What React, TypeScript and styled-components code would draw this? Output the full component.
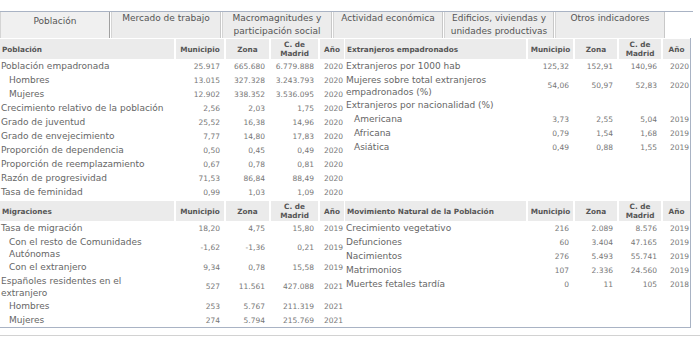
import React from 'react';
import styled, { createGlobalStyle } from 'styled-components';

type Values = [string, string, string, string];

interface IRow {
  label: string;
  values?: Values;
  sub?: boolean;
}

interface ISection {
  title: string;
  rows: IRow[];
}

const GlobalStyle = createGlobalStyle`
  html, body {
    margin: 0;
    padding: 0;
    background: #fff;
  }
  body {
    font-family: "DejaVu Sans", Verdana, sans-serif;
  }
`;

const tabs = [
  'Población',
  'Mercado de trabajo',
  'Macromagnitudes y participación social',
  'Actividad económica',
  'Edificios, viviendas y unidades productivas',
  'Otros indicadores',
];

const poblacion: ISection = {
  title: 'Población',
  rows: [
    { label: 'Población empadronada', values: ['25.917', '665.680', '6.779.888', '2020'] },
    { label: 'Hombres', sub: true, values: ['13.015', '327.328', '3.243.793', '2020'] },
    { label: 'Mujeres', sub: true, values: ['12.902', '338.352', '3.536.095', '2020'] },
    { label: 'Crecimiento relativo de la población', values: ['2,56', '2,03', '1,75', '2020'] },
    { label: 'Grado de juventud', values: ['25,52', '16,38', '14,96', '2020'] },
    { label: 'Grado de envejecimiento', values: ['7,77', '14,80', '17,83', '2020'] },
    { label: 'Proporción de dependencia', values: ['0,50', '0,45', '0,49', '2020'] },
    { label: 'Proporción de reemplazamiento', values: ['0,67', '0,78', '0,81', '2020'] },
    { label: 'Razón de progresividad', values: ['71,53', '86,84', '88,49', '2020'] },
    { label: 'Tasa de feminidad', values: ['0,99', '1,03', '1,09', '2020'] },
  ],
};

const extranjeros: ISection = {
  title: 'Extranjeros empadronados',
  rows: [
    { label: 'Extranjeros por 1000 hab', values: ['125,32', '152,91', '140,96', '2020'] },
    { label: 'Mujeres sobre total extranjeros empadronados (%)', values: ['54,06', '50,97', '52,83', '2020'] },
    { label: 'Extranjeros por nacionalidad (%)' },
    { label: 'Americana', sub: true, values: ['3,73', '2,55', '5,04', '2019'] },
    { label: 'Africana', sub: true, values: ['0,79', '1,54', '1,68', '2019'] },
    { label: 'Asiática', sub: true, values: ['0,49', '0,88', '1,55', '2019'] },
  ],
};

const migraciones: ISection = {
  title: 'Migraciones',
  rows: [
    { label: 'Tasa de migración', values: ['18,20', '4,75', '15,80', '2019'] },
    { label: 'Con el resto de Comunidades Autónomas', sub: true, values: ['-1,62', '-1,36', '0,21', '2019'] },
    { label: 'Con el extranjero', sub: true, values: ['9,34', '0,78', '15,58', '2019'] },
    { label: 'Españoles residentes en el extranjero', values: ['527', '11.561', '427.088', '2021'] },
    { label: 'Hombres', sub: true, values: ['253', '5.767', '211.319', '2021'] },
    { label: 'Mujeres', sub: true, values: ['274', '5.794', '215.769', '2021'] },
  ],
};

const movimiento: ISection = {
  title: 'Movimiento Natural de la Población',
  rows: [
    { label: 'Crecimiento vegetativo', values: ['216', '2.089', '8.576', '2019'] },
    { label: 'Defunciones', values: ['60', '3.404', '47.165', '2019'] },
    { label: 'Nacimientos', values: ['276', '5.493', '55.741', '2019'] },
    { label: 'Matrimonios', values: ['107', '2.336', '24.560', '2019'] },
    { label: 'Muertes fetales tardía', values: ['0', '11', '105', '2018'] },
  ],
};

const LEFT_COLS = '174px 48px 43px 47px 24px';
const RIGHT_COLS = '181px 45px 42px 42px 27px';

const Page = styled.div`
  width: 700px;
  height: 341px;
  padding-top: 11px;
  box-sizing: border-box;
  overflow: hidden;
`;

const TabBar = styled.div`
  display: flex;
  gap: 1px;
  width: 693px;
  height: 26px;
  border-top: 1px solid #a9b3c4;
`;

const Tab = styled.div<{ $active?: boolean }>`
  width: 110px;
  box-sizing: border-box;
  padding: ${props => (props.$active ? '3px' : '0')} 4px 0;
  background: ${props => (props.$active ? '#f0f0f0' : '#ececec')};
  border-left: 1px solid #d4d4d4;
  border-right: 1px solid ${props => (props.$active ? '#a0a0a0' : '#c8c8c8')};
  color: #555;
  font-size: 9px;
  line-height: 13px;
  text-align: center;
`;

const Panel = styled.div`
  width: 691px;
  height: 290px;
  box-sizing: border-box;
  padding-top: 1px;
  display: grid;
  grid-template-columns: 344px 345px;
  grid-template-rows: 160px 1fr;
  column-gap: 1px;
  row-gap: 2px;
  border-right: 1px solid #a9b3c4;
  border-bottom: 1px solid #a9b3c4;
  overflow: hidden;
`;

const Grid = styled.div<{ $cols: string }>`
  display: grid;
  grid-template-columns: ${props => props.$cols};
  grid-auto-rows: minmax(14px, auto);
  column-gap: 2px;
  align-content: start;
`;

const Head = styled.div<{ $left?: boolean }>`
  display: flex;
  align-items: center;
  justify-content: ${props => (props.$left ? 'flex-start' : 'center')};
  padding: 1px 2px;
  background: #ebebeb;
  color: #555;
  font-weight: bold;
  font-size: 7.3px;
  line-height: 9px;
  text-align: center;
`;

const Label = styled.div<{ $sub?: boolean }>`
  display: flex;
  align-items: center;
  padding: 0.5px 6px 0.5px ${props => (props.$sub ? '9px' : '1px')};
  color: #666;
  font-size: 9px;
  line-height: 12px;
`;

const Num = styled.div<{ $year?: boolean }>`
  display: flex;
  align-items: center;
  justify-content: flex-end;
  padding-right: ${props => (props.$year ? '1px' : '4px')};
  color: #777;
  font-size: 7.5px;
  white-space: nowrap;
`;

const Footer = styled.div`
  margin-top: 7px;
  width: 700px;
  border-top: 1px solid #d2d2d2;
`;

const DataTable = ({ section, cols }: { section: ISection; cols: string }) => {
  return (
    <Grid $cols={cols}>
      <Head $left>{section.title}</Head>
      <Head>Municipio</Head>
      <Head>Zona</Head>
      <Head>
        C. de
        <br />
        Madrid
      </Head>
      <Head>Año</Head>
      {section.rows.map(row => (
        <React.Fragment key={row.label + (row.sub ? '-s' : '')}>
          <Label $sub={row.sub}>{row.label}</Label>
          {[0, 1, 2, 3].map(i => (
            <Num key={i} $year={i === 3}>
              {row.values ? row.values[i] : ''}
            </Num>
          ))}
        </React.Fragment>
      ))}
    </Grid>
  );
};

export default function App() {
  return (
    <Page>
      <GlobalStyle />
      <TabBar>
        {tabs.map((t, i) => (
          <Tab key={t} $active={i === 0}>
            {t}
          </Tab>
        ))}
      </TabBar>
      <Panel>
        <DataTable section={poblacion} cols={LEFT_COLS} />
        <DataTable section={extranjeros} cols={RIGHT_COLS} />
        <DataTable section={migraciones} cols={LEFT_COLS} />
        <DataTable section={movimiento} cols={RIGHT_COLS} />
      </Panel>
      <Footer />
    </Page>
  );
}
